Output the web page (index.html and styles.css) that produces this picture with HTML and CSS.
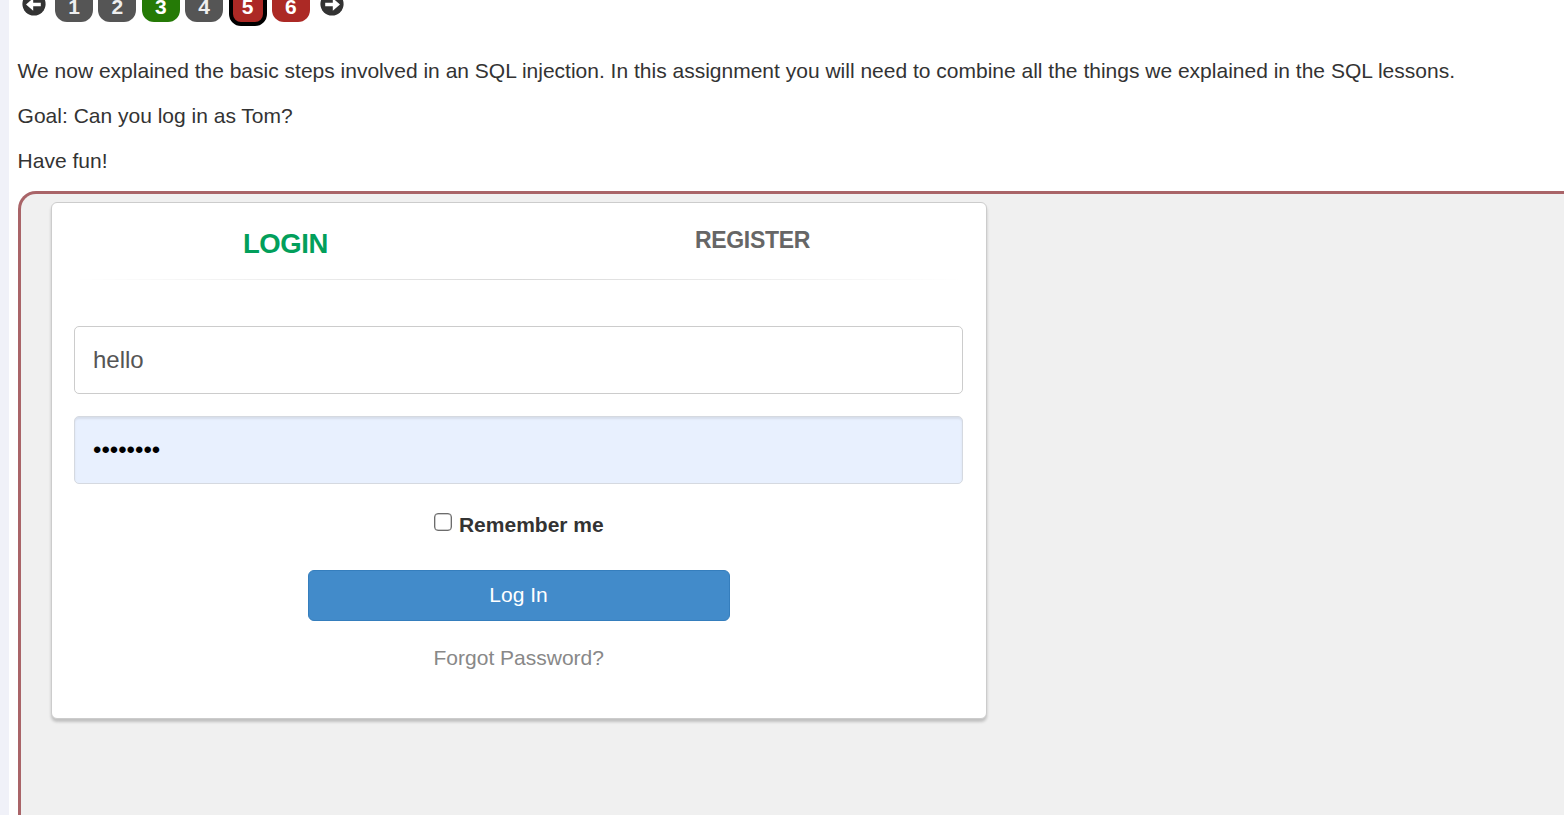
FILE: index.html
```html
<!DOCTYPE html>
<html lang="en">
<head>
<meta charset="utf-8">
<title>SQL Injection</title>
<link rel="stylesheet" href="styles.css">
</head>
<body>
<div class="page">
  <aside class="sidebar"></aside>
  <main class="content">
    <nav class="pager">
      <svg class="arrow" viewBox="0 0 24 24"><circle cx="12" cy="12" r="11.6" fill="#333"/><path d="M4 12.500l7.200-6.300v4.500h7.600v3.600h-7.600v4.500z" fill="#fff"/></svg>
      <span class="pill">1</span>
      <span class="pill">2</span>
      <span class="pill solved">3</span>
      <span class="pill">4</span>
      <span class="pill open current">5</span>
      <span class="pill open">6</span>
      <svg class="arrow next" viewBox="0 0 24 24"><circle cx="12" cy="12" r="11.6" fill="#333"/><path d="M20 12.500l-7.200-6.300v4.500H5.200v3.600h7.600v4.500z" fill="#fff"/></svg>
    </nav>
    <div class="lesson">
      <p>We now explained the basic steps involved in an SQL injection. In this assignment you will need to combine all the things we explained in the SQL lessons.</p>
      <p>Goal: Can you log in as Tom?</p>
      <p>Have fun!</p>
    </div>
    <section class="attack">
      <div class="panel">
        <div class="tabs">
          <a class="tab active">LOGIN</a>
          <a class="tab">REGISTER</a>
        </div>
        <div class="rule"></div>
        <form class="form">
          <div class="field">hello</div>
          <div class="field password">••••••••</div>
          <label class="remember"><span class="checkbox"></span><span class="remember-text">Remember me</span></label>
          <button class="submit" type="button">Log In</button>
          <a class="forgot">Forgot Password?</a>
        </form>
      </div>
    </section>
  </main>
</div>
</body>
</html>
```
FILE: styles.css
```css
* { box-sizing: border-box; }
body {
  margin: 0;
  overflow: hidden;
  background: #fff;
  color: #333;
  font: 21px/30px "Liberation Sans", Arial, sans-serif;
}
.page { display: flex; height: 815px; overflow: hidden; }
.sidebar { flex: 0 0 9px; background: #f0f1f8; }
.content {
  flex: 1;
  min-width: 0;
  padding-left: 9px;
  display: flex;
  flex-direction: column;
}
.pager {
  display: flex;
  align-items: flex-start;
  height: 56px;
  margin-top: -16px;
  padding-left: 4px;
}
.arrow { width: 24px; height: 24px; margin: 8px 9.5px 0 -0.5px; }
.arrow.next { margin: 8px 0 0 4.2px; }
.pill {
  width: 38px;
  height: 38px;
  margin-right: 5.4px;
  border-radius: 12px;
  background: #555;
  color: #eee;
  font-weight: bold;
  line-height: 46px;
  text-align: center;
}
.solved { background: #257a06; color: #fff; }
.open { background: #ac2925; color: #fff; }
.current {
  height: 42px;
  border: 4px solid #000;
  line-height: 38px;
}
.lesson { padding-top: 16px; margin-left: -0.4px; white-space: nowrap; }
.lesson p { margin: 0 0 15px; }
.attack {
  flex: 1;
  margin-right: -20px;
  padding: 8px 0 0 30px;
  border: 3px solid #a96468;
  border-bottom: 0;
  border-radius: 18px 0 0 0;
  background: #f0f0f0;
}
.panel {
  width: 936px;
  height: 517px;
  padding: 0 22px;
  border: 1px solid #ccc;
  border-radius: 6px;
  background: #fff;
  box-shadow: 0 3px 3px rgba(0, 0, 0, .2);
}
.tabs { display: flex; height: 76px; margin: 0 -22px; }
.tab {
  flex: 1;
  padding-top: 22px;
  color: #666;
  font-size: 23px;
  font-weight: bold;
  letter-spacing: -0.3px;
  text-align: center;
}
.active { padding-top: 26px; color: #029f5b; font-size: 27.5px; letter-spacing: -0.4px; }
.rule {
  height: 1px;
  background: linear-gradient(to right, rgba(0,0,0,0), rgba(0,0,0,.15), rgba(0,0,0,0));
}
.form {
  display: flex;
  flex-direction: column;
  align-items: center;
  padding-top: 46px;
}
.field {
  width: 889px;
  height: 68px;
  margin: 0 1px 22px 0;
  padding-left: 18px;
  border: 1px solid #ccc;
  border-radius: 5px;
  color: #555;
  font-size: 24px;
  line-height: 66px;
}
.password {
  border-color: #d5d9e0;
  background: #e8f0fe;
  box-shadow: inset 0 2px 2px rgba(0, 0, 0, .075);
  color: #000;
}
.remember {
  display: flex;
  gap: 7px;
  height: 64px;
  padding-top: 4px;
  font-weight: bold;
}
.remember-text { margin-left: -0.4px; }
.checkbox {
  width: 18px;
  height: 18px;
  margin-top: 3px;
  border: 1px solid #6c6c6c;
  border-radius: 4px;
  box-shadow: inset 0 0 0 0.5px #999;
}
.submit {
  width: 422px;
  height: 51px;
  padding: 0 1px 2px 0;
  border: 1px solid #357ebd;
  border-radius: 6px;
  background: #428bca;
  color: #fff;
  font: inherit;
}
.forgot { margin: 22px 0.5px 0 0; color: #888; }
```
